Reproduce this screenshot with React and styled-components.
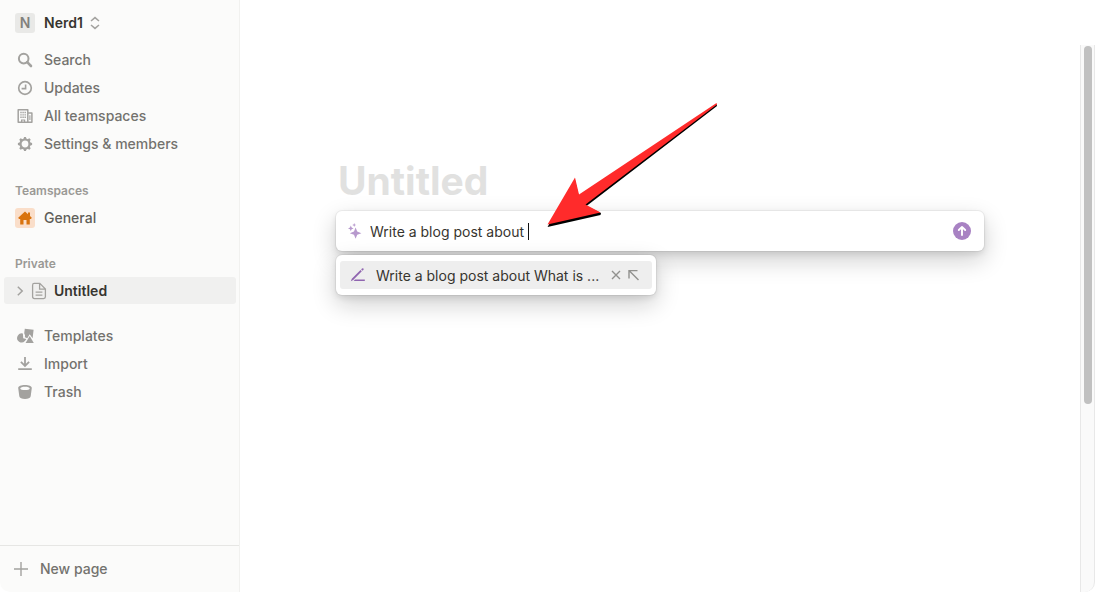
import React, { useState } from "react";
import styled, { createGlobalStyle } from "styled-components";

const GlobalStyle = createGlobalStyle`
  *, *::before, *::after { box-sizing: border-box; }
  body {
    margin: 0;
    background: #ffffff;
    color: #37352f;
    font-family: Inter, "Liberation Sans", sans-serif;
    font-size: 14px;
    line-height: 20px;
  }
  button, input { font: inherit; color: inherit; }
`;

const Page = styled.div`
  display: flex;
  min-height: 100vh;
`;

const Sidebar = styled.aside`
  display: flex;
  flex-direction: column;
  flex: 0 0 240px;
  background: #fbfbfa;
  border-right: 1px solid #f1f1ef;
  border-bottom-left-radius: 10px;
  color: #73726e;
  font-weight: 500;
`;

const PlainButton = styled.button`
  display: flex;
  align-items: center;
  margin: 0;
  padding: 0;
  border: 0;
  background: none;
  text-align: left;
  cursor: pointer;
`;

const Workspace = styled(PlainButton)`
  height: 46px;
  padding: 0 15px;
  color: #37352f;
  font-weight: 600;
  svg { margin-left: 7px; }
`;

const Badge = styled.span`
  display: flex;
  align-items: center;
  justify-content: center;
  width: 20px;
  height: 20px;
  margin-right: 9px;
  border-radius: 3px;
  background: ${(p) => (p.$warm ? "#fadec9" : "#e9e9e7")};
  color: #82817d;
`;

const List = styled.ul`
  margin: ${(p) => (p.$spaced ? "18px 0 0" : "0")};
  padding: 0;
  list-style: none;
`;

const NavButton = styled(PlainButton)`
  width: 100%;
  height: 28px;
  padding: 0 15px;
  svg { margin-right: 9px; }
`;

const SectionLabel = styled.h2`
  height: 26px;
  margin: 20px 0 0;
  padding: 0 15px;
  color: #9a9995;
  font-size: 12px;
  font-weight: 600;
  line-height: 26px;
`;

const TeamButton = styled(PlainButton)`
  width: 100%;
  height: 27px;
  padding: 0 15px;
  color: #5f5e59;
`;

const PageButton = styled(PlainButton)`
  width: calc(100% - 7px);
  height: 27px;
  margin: 0 3px 0 4px;
  padding: 0 10px;
  gap: 6px;
  border-radius: 3px;
  background: #f0f0ef;
  color: #37352f;
  font-weight: 600;
`;

const NewPage = styled(PlainButton)`
  height: 47px;
  margin-top: auto;
  padding: 0 13px;
  gap: 11px;
  border-top: 1px solid #e6e6e4;
`;

const Main = styled.main`
  display: flex;
  flex: 1;
  flex-direction: column;
  min-width: 0;
  padding-top: 45px;
`;

const ScrollArea = styled.div`
  display: flex;
  flex: 1;
`;

const Content = styled.div`
  flex: 1;
  min-width: 0;
  padding: 112px 96px 0;
`;

const Title = styled.h1`
  margin: 0 0 6px;
  padding-left: 2px;
  color: #e1e1e0;
  font-size: 39px;
  font-weight: 700;
  line-height: 48px;
`;

const Track = styled.div`
  flex: 0 0 15px;
  padding: 1px 2px 0 3px;
  border: solid #e8e8e8;
  border-width: 0 1px;
  border-bottom-right-radius: 10px;
  background: #fafafa;
`;

const Thumb = styled.div`
  width: 8px;
  height: 358px;
  border-radius: 4px;
  background: #c1c1c1;
`;

const Assistant = styled.div`
  position: relative;
`;

const shadow = `
  box-shadow: 0 0 0 1px rgba(15, 15, 15, 0.05), 0 3px 6px rgba(15, 15, 15, 0.1),
    0 9px 24px rgba(15, 15, 15, 0.2);
`;

const PromptBar = styled.form`
  display: flex;
  align-items: center;
  height: 40px;
  padding: 0 13px 0 12px;
  border-radius: 6px;
  background: #ffffff;
  ${shadow}
`;

const PromptInput = styled.input`
  field-sizing: content;
  min-width: 0;
  margin-left: 8px;
  padding: 2px 0 0;
  border: 0;
  outline: 0;
  background: none;
  white-space: pre;
`;

const Caret = styled.span`
  width: 1px;
  height: 17px;
  background: #111111;
`;

const SendButton = styled(PlainButton)`
  justify-content: center;
  width: 18px;
  height: 18px;
  margin-left: auto;
  border-radius: 50%;
  background: #a882c3;
`;

const Suggestions = styled.div`
  width: 320px;
  max-width: 100%;
  margin-top: 4px;
  padding: 6px 4px;
  border-radius: 6px;
  background: #ffffff;
  ${shadow}
`;

const Suggestion = styled.div`
  display: flex;
  align-items: center;
  height: 28px;
  padding: 0 12px 0 10px;
  border-radius: 3px;
  background: #eeeeee;
`;

const SuggestionText = styled(PlainButton)`
  flex: 1;
  min-width: 0;
  gap: 10px;
  svg { flex: none; }
  span {
    padding-top: 2px;
    white-space: nowrap;
  }
`;

const SuggestionAction = styled(PlainButton)`
  margin-left: 5px;
`;

const Arrow = styled.svg`
  position: absolute;
  top: -113px;
  left: 208px;
  pointer-events: none;
`;

const gray = "#a3a29f";

const SearchIcon = () => (
  <svg width="20" height="20" viewBox="0 0 20 20" fill="none" stroke={gray} strokeWidth="2">
    <circle cx="8.7" cy="8.6" r="4.8" />
    <path d="M12.2 12.2 16 16" strokeWidth="2.6" strokeLinecap="round" />
  </svg>
);

const ClockIcon = () => (
  <svg width="20" height="20" viewBox="0 0 20 20" fill="none" stroke={gray} strokeWidth="1.7">
    <circle cx="10" cy="10" r="6.3" />
    <path d="M10.6 6.4V10.6H6.6" strokeWidth="1.6" />
  </svg>
);

const BuildingIcon = () => (
  <svg width="20" height="20" viewBox="0 0 20 20" fill="none" stroke={gray} strokeWidth="1.5">
    <path d="M3.2 16.3V3.7H12.8V16.3ZM12.8 7H16.9V16.3H12.8" strokeLinejoin="round" />
    <path d="M14.9 9.2V14" strokeWidth="1.1" />
    <path
      d="M5.3 5.8H6.7V7.2H5.3ZM7.4 5.8H8.8V7.2H7.4ZM9.5 5.8H10.9V7.2H9.5ZM5.3 8.2H6.7V9.6H5.3ZM7.4 8.2H8.8V9.6H7.4ZM9.5 8.2H10.9V9.6H9.5ZM5.3 10.6H6.7V12H5.3ZM7.4 10.6H8.8V12H7.4ZM9.5 10.6H10.9V12H9.5ZM6 13.4H10.2V16H8.9V14.6H7.3V16H6Z"
      fill={gray}
      stroke="none"
    />
  </svg>
);

const GearIcon = () => (
  <svg width="20" height="20" viewBox="0 0 20 20" fill="none" stroke={gray}>
    <circle cx="10" cy="10" r="4.5" strokeWidth="2.2" />
    {[0, 45, 90, 135, 180, 225, 270, 315].map((a) => (
      <path key={a} d="M8.2 5.4 9.1 2.9H10.9L11.8 5.4Z" fill={gray} stroke="none" transform={`rotate(${a} 10 10)`} />
    ))}
  </svg>
);

const TemplatesIcon = () => (
  <svg width="20" height="20" viewBox="0 0 20 20" fill={gray}>
    <path d="M9.8 2.8 18.6 3.8 17.6 12.2 14.7 8.2 12.3 12.2 9.9 11.3A5 5 0 0 0 9.2 7.2Z" />
    <path d="M7.9 7.6A4.5 4.5 0 1 0 9.9 15L11.4 13 8.2 12.3Z" />
    <path d="M14.7 10 18.8 17H10.6Z" />
  </svg>
);

const ImportIcon = () => (
  <svg width="20" height="20" viewBox="0 0 20 20" fill="none" stroke={gray} strokeWidth="1.8">
    <path d="M10 3V11.8M5.9 7.8 10 11.9 14.1 7.8M3.2 15.2H16.8" />
  </svg>
);

const TrashIcon = () => (
  <svg width="20" height="20" viewBox="0 0 20 20" fill={gray}>
    <path
      fillRule="evenodd"
      d="M3.2 6C3.2 4.1 6.1 3 10 3S16.8 4.1 16.8 6L15.7 14.3C15.3 16.2 13.2 17 10 17S4.7 16.2 4.3 14.3ZM5.2 6.4C5.5 7.5 7.3 8.1 10 8.1S14.5 7.5 14.8 6.4C14.5 5.3 12.7 4.8 10 4.8S5.5 5.3 5.2 6.4Z"
    />
  </svg>
);

const ChevronsIcon = () => (
  <svg width="10" height="14" viewBox="0 0 10 14" fill="none" stroke={gray} strokeWidth="1.5">
    <path d="M1 5 5 1.6 9 5M1 9 5 12.4 9 9" />
  </svg>
);

const HomeIcon = () => (
  <svg width="16" height="16" viewBox="0 0 16 16" fill="#d9730d">
    <path d="M8 1.5 1.2 7.8 2 8.9H3.2V14.5H6.5V10H9.5V14.5H12.8V8.9H14L14.8 7.8 13 6V2.4H11V4.2Z" />
  </svg>
);

const ChevronIcon = () => (
  <svg width="10" height="12" viewBox="0 0 10 12" fill="none" stroke={gray} strokeWidth="1.5">
    <path d="M3.8 1.8 8.2 6 3.8 10.2" />
  </svg>
);

const FileIcon = () => (
  <svg width="18" height="18" viewBox="0 0 18 18" fill="none" stroke={gray} strokeWidth="1.3">
    <path d="M4.2 1.4H9.8L15.4 7V14.8Q15.4 16.6 13.6 16.6H4.4Q2.6 16.6 2.6 14.8V3.2Q2.6 1.4 4.2 1.4ZM9.6 1.4V7.2H15.4M5.6 10.2H12.4M5.6 13.1H12.4" />
  </svg>
);

const PlusIcon = () => (
  <svg width="16" height="16" viewBox="0 0 16 16" stroke={gray} strokeWidth="1.4">
    <path d="M8 1V15M1 8H15" />
  </svg>
);

const SparkleIcon = () => (
  <svg width="14" height="16" viewBox="0 0 14 16" fill="#b799cd">
    <path d="M7.6 4.6 9.2 8.6 13.4 10.2 9.2 11.8 7.6 15.8 6 11.8 1.8 10.2 6 8.6Z" />
    <path d="M2.8 2.6 3.6 4.6 5.6 5.4 3.6 6.2 2.8 8.2 2 6.2 0 5.4 2 4.6Z" />
    <path d="M6.2 0 6.8 1.4 8.2 2 6.8 2.6 6.2 4 5.6 2.6 4.2 2 5.6 1.4Z" />
  </svg>
);

const PenIcon = () => (
  <svg width="16" height="16" viewBox="0 0 16 16" fill="#9065b0">
    <path d="M0.8 14.2 1.8 11.7 10.5 3 11.8 4.3 3.2 13ZM11.1 2.3 12.1 1.4Q12.8 0.9 13.4 1.5 14 2.1 13.5 2.8L12.5 3.7Z" />
    <path d="M5 12.6H14.8V14H3.6Z" />
  </svg>
);

const CloseIcon = () => (
  <svg width="10" height="10" viewBox="0 0 10 10" stroke="#91918e" strokeWidth="1.4">
    <path d="M1 1 9 9M9 1 1 9" />
  </svg>
);

const FillIcon = () => (
  <svg width="14" height="12" viewBox="0 0 14 12" fill="none" stroke="#91918e" strokeWidth="1.4">
    <path d="M3 9.5V1.6H11.5M3 1.6 12.5 11" />
  </svg>
);

const UpIcon = () => (
  <svg width="12" height="12" viewBox="0 0 12 12" fill="none" stroke="#ffffff" strokeWidth="1.9" strokeLinecap="round" strokeLinejoin="round">
    <path d="M6 10V2M2.8 5 6 1.9 9.2 5" />
  </svg>
);

const primary = [
  ["Search", SearchIcon],
  ["Updates", ClockIcon],
  ["All teamspaces", BuildingIcon],
  ["Settings & members", GearIcon],
];

const secondary = [
  ["Templates", TemplatesIcon],
  ["Import", ImportIcon],
  ["Trash", TrashIcon],
];

const NavList = ({ items, spaced }) => (
  <List $spaced={spaced}>
    {items.map(([label, Icon]) => (
      <li key={label}>
        <NavButton type="button">
          <Icon />
          {label}
        </NavButton>
      </li>
    ))}
  </List>
);

export default function App() {
  const [prompt, setPrompt] = useState("Write a blog post about ");

  return (
    <>
      <GlobalStyle />
      <Page>
        <Sidebar>
          <Workspace type="button">
            <Badge>N</Badge>
            Nerd1
            <ChevronsIcon />
          </Workspace>
          <NavList items={primary} />
          <SectionLabel>Teamspaces</SectionLabel>
          <TeamButton type="button">
            <Badge $warm>
              <HomeIcon />
            </Badge>
            General
          </TeamButton>
          <SectionLabel>Private</SectionLabel>
          <PageButton type="button">
            <ChevronIcon />
            <FileIcon />
            Untitled
          </PageButton>
          <NavList items={secondary} spaced />
          <NewPage type="button">
            <PlusIcon />
            New page
          </NewPage>
        </Sidebar>
        <Main>
          <ScrollArea>
            <Content>
              <Title>Untitled</Title>
              <Assistant>
                <PromptBar onSubmit={(e) => e.preventDefault()}>
                  <SparkleIcon />
                  <PromptInput
                    aria-label="Prompt"
                    value={prompt}
                    onChange={(e) => setPrompt(e.target.value)}
                  />
                  <Caret />
                  <SendButton type="submit" aria-label="Send">
                    <UpIcon />
                  </SendButton>
                </PromptBar>
                <Suggestions>
                  <Suggestion>
                    <SuggestionText type="button">
                      <PenIcon />
                      <span>Write a blog post about What is ...</span>
                    </SuggestionText>
                    <SuggestionAction type="button" aria-label="Dismiss">
                      <CloseIcon />
                    </SuggestionAction>
                    <SuggestionAction type="button" aria-label="Use suggestion">
                      <FillIcon />
                    </SuggestionAction>
                  </Suggestion>
                </Suggestions>
                <Arrow width="180" height="134" viewBox="0 0 180 134" aria-hidden="true">
                  <path d="M3.500 129 31 82 35 99 172.500 6 173 8 42.500 108 57 115 56.500 117Z" fill="#000000" />
                  <path d="M3.500 126.500 31 79.500 35 96.500 172.500 5 173 6.500 41.500 106.500 56.500 114.500Z" fill="#ff2b2b" />
                </Arrow>
              </Assistant>
            </Content>
            <Track>
              <Thumb />
            </Track>
          </ScrollArea>
        </Main>
      </Page>
    </>
  );
}
